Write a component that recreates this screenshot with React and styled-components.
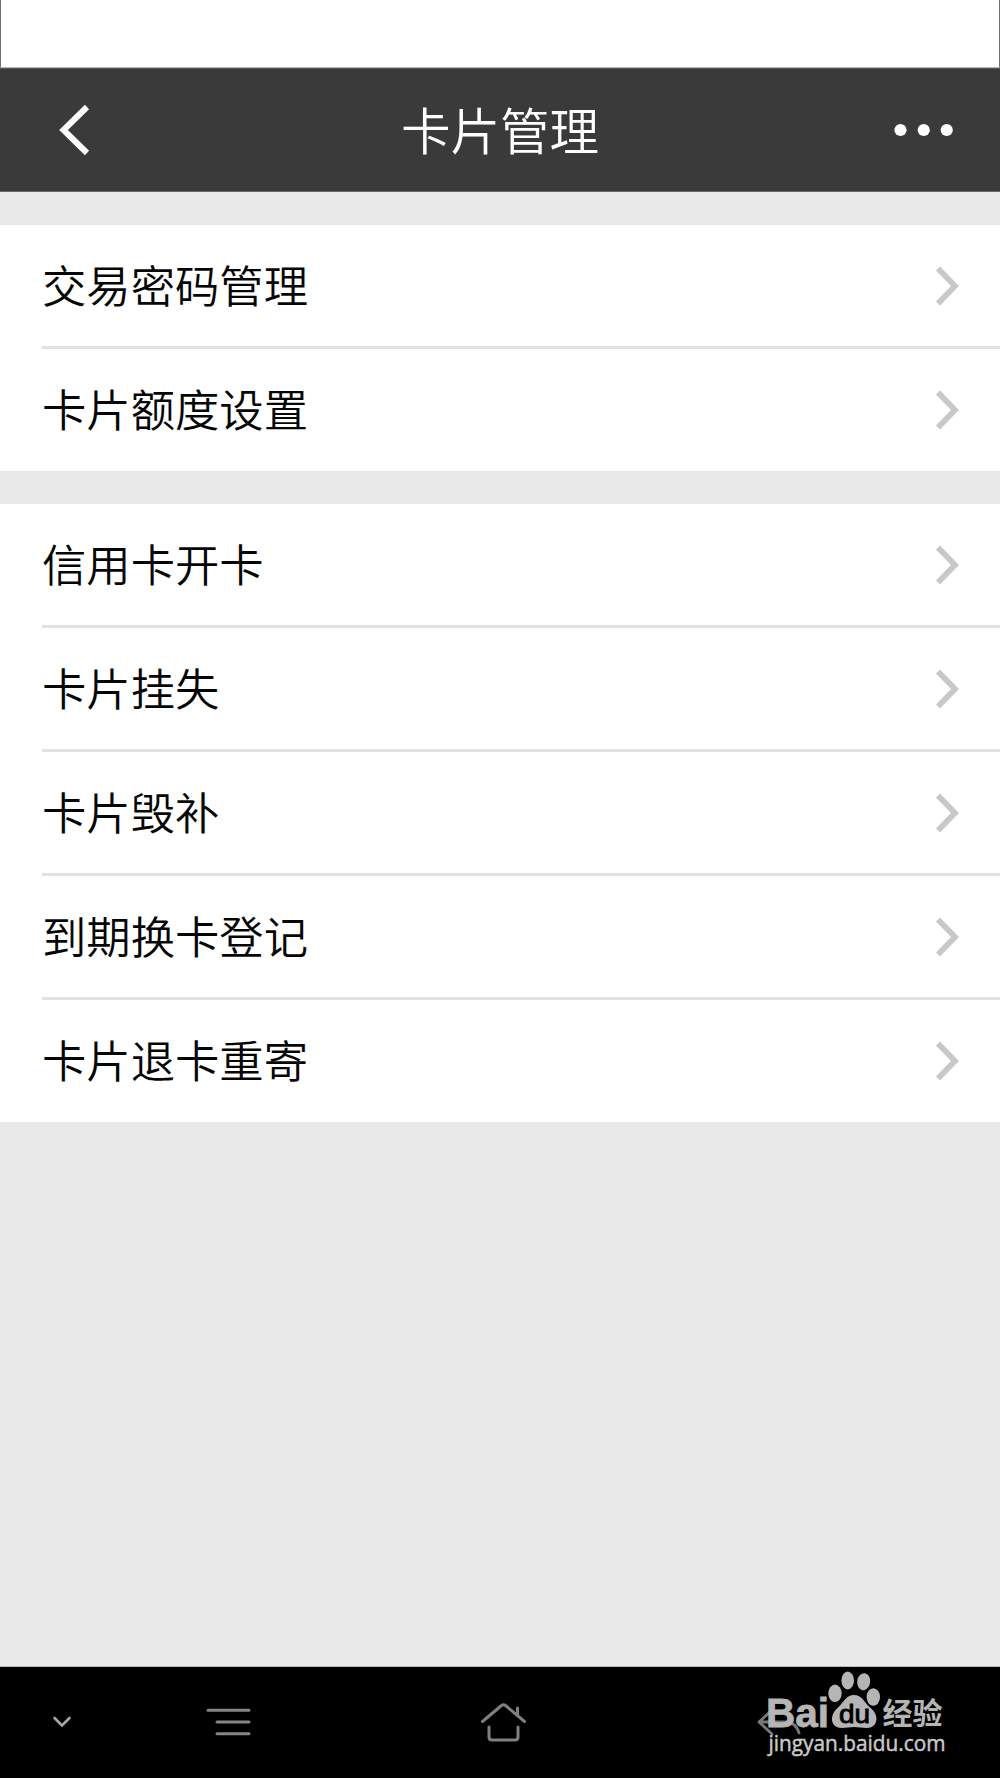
import React from "react";
import styled, { createGlobalStyle } from "styled-components";

const GlobalStyle = createGlobalStyle`
  * { box-sizing: border-box; }
  body { margin: 0; background: #e9e9e9; }
`;

const Screen = styled.div`
  width: 1000px;
  height: 1778px;
  display: flex;
  flex-direction: column;
  overflow: hidden;
  background: #e9e9e9;
  font-family: "Noto Sans CJK SC", "Liberation Sans", sans-serif;
`;

const StatusBar = styled.div`
  flex: none;
  height: 68px;
  background: #fff;
  border: solid #707070;
  border-width: 0 1px;
  border-bottom: 1px solid #b5b5b5;
`;

const TitleBar = styled.header`
  flex: none;
  height: 124px;
  display: grid;
  grid-template-columns: 150px 1fr 150px;
  align-items: center;
  background: #3a3a3a;
  border-top: 1px solid #555;
  border-bottom: 1px solid #6b6868;
`;

const BarButton = styled.button`
  display: flex;
  justify-content: ${(p) => (p.$end ? "flex-end" : "flex-start")};
  padding: ${(p) => (p.$end ? "0 46px 0 0" : "0 0 0 58px")};
  border: 0;
  background: none;
`;

const Title = styled.h1`
  margin: 0;
  padding-bottom: 3px;
  text-align: center;
  color: #fff;
  font-size: 49.5px;
  font-weight: 350;
  line-height: 72px;
`;

const Menu = styled.main`
  flex: 1;
  display: flex;
  flex-direction: column;
  gap: 33px;
  padding-top: 33px;
`;

const Group = styled.section`
  display: flex;
  flex-direction: column;
  background: #fff;
`;

const Row = styled.div`
  height: ${(p) => (p.$last ? 122 : 124)}px;
  margin-left: 42px;
  padding: 0 41px 0 0;
  display: flex;
  align-items: center;
  justify-content: space-between;
  border-bottom: ${(p) => (p.$last ? "0" : "3px solid #e2e2e2")};
`;

const Label = styled.span`
  padding-bottom: 4px;
  color: #060606;
  font-size: 44.33px;
  font-weight: 350;
  line-height: 64px;
`;

const NavBar = styled.footer`
  position: relative;
  flex: none;
  height: 112px;
  display: grid;
  grid-template-columns: 206px 274px 277px 1fr;
  align-items: center;
  padding-bottom: 1px;
  background: #000;
  border-top: 1px solid #bbb;
`;

const NavItem = styled.div`
  display: flex;
  padding-left: ${(p) => p.$inset || 0}px;
`;

const Watermark = styled.div`
  position: absolute;
  left: 766px;
  top: 4px;
  width: 190px;
  height: 96px;
`;

const groups = [
  ["交易密码管理", "卡片额度设置"],
  ["信用卡开卡", "卡片挂失", "卡片毁补", "到期换卡登记", "卡片退卡重寄"],
];

const BackIcon = () => (
  <svg width="32" height="52" viewBox="0 0 32 52" fill="none" stroke="#fff" strokeWidth="6">
    <path d="M29 3 L5.500 26 L29 49" />
  </svg>
);

const MoreIcon = () => (
  <svg width="60" height="14" viewBox="0 0 60 14" fill="#fff">
    <circle cx="6.500" cy="7" r="6.1" />
    <circle cx="29.700" cy="7" r="6.1" />
    <circle cx="52.700" cy="7" r="6.1" />
  </svg>
);

const Chevron = () => (
  <svg width="24" height="40" viewBox="0 0 24 40" fill="none" stroke="#c8c8c8" strokeWidth="5.800">
    <path d="M3 2.500 L20 20 L3 37.500" />
  </svg>
);

const DownIcon = () => (
  <svg width="20" height="14" viewBox="0 0 20 14" fill="none" stroke="#a6a6a6" strokeWidth="2.6" strokeLinecap="round">
    <path d="M2.500 3 L10 10.500 L17.500 3" />
  </svg>
);

const MenuIcon = () => (
  <svg width="46" height="30" viewBox="0 0 46 30" fill="none" stroke="#858585" strokeWidth="3" strokeLinecap="round">
    <path d="M2 3.300 H43 M11 15 H43 M11 26.700 H43" />
  </svg>
);

const HomeIcon = () => (
  <svg width="48" height="42" viewBox="0 0 48 42" fill="none" stroke="#808080" strokeWidth="3" strokeLinecap="round" strokeLinejoin="round">
    <path d="M2.500 20.500 L21.500 4.500 Q23.500 3 25.500 4.500 L44.500 20.500 M37.500 14 V7" />
    <path d="M9 26 V36 Q9 39 12 39 H35 Q38 39 38 36 V26" />
  </svg>
);

const ReturnIcon = () => (
  <svg width="46" height="30" viewBox="0 0 46 30" fill="none" stroke="#777" strokeWidth="2.800" strokeLinecap="round" strokeLinejoin="round">
    <path d="M15 3 L2 15 L15 27 M2 15 H28 Q39 15 42 26" />
  </svg>
);

const BrandLogo = () => (
  <svg width="190" height="96" viewBox="0 0 190 96" fill="#b5b5b5">
    <text x="0" y="55.500" fontFamily="Liberation Sans, sans-serif" fontSize="41" fontWeight="700" textLength="63" lengthAdjust="spacingAndGlyphs" stroke="#b5b5b5" strokeWidth="0.8">Bai</text>
    <ellipse cx="69" cy="22.300" rx="6.700" ry="8.700" />
    <ellipse cx="81.700" cy="9.500" rx="6.300" ry="8.900" />
    <ellipse cx="97.700" cy="10.700" rx="6.500" ry="8.600" transform="rotate(8 97.700 10.700)" />
    <ellipse cx="107.300" cy="26" rx="6.700" ry="8.700" />
    <path d="M88 24 C96 24 98 31 104 36.500 C114 44 112 57 101 57 C96 57 92 56 88 56 C84 56 80 57 76 57 C64 57 63 44 72 36.500 C78 31 80 24 88 24 Z" />
    <text x="73" y="51.500" fill="#000" stroke="#000" strokeWidth="0.900" fontFamily="Liberation Sans, sans-serif" fontSize="26.500" textLength="31" lengthAdjust="spacingAndGlyphs">du</text>
    <text x="116.500" y="53" fontFamily="Noto Sans CJK SC, sans-serif" fontSize="30" fontWeight="700">经验</text>
    <text x="2.500" y="80" fill="#c9c9c9" stroke="#c9c9c9" strokeWidth="0.500" fontFamily="Open Sans, sans-serif" fontSize="22.500" textLength="177" lengthAdjust="spacingAndGlyphs">jingyan.baidu.com</text>
  </svg>
);

export default function App() {
  return (
    <Screen>
      <GlobalStyle />
      <StatusBar />
      <TitleBar>
        <BarButton><BackIcon /></BarButton>
        <Title>卡片管理</Title>
        <BarButton $end><MoreIcon /></BarButton>
      </TitleBar>
      <Menu>
        {groups.map((items, g) => (
          <Group key={g}>
            {items.map((item, i) => (
              <Row key={item} $last={i === items.length - 1}>
                <Label>{item}</Label>
                <Chevron />
              </Row>
            ))}
          </Group>
        ))}
      </Menu>
      <NavBar>
        <NavItem $inset={51.7}><DownIcon /></NavItem>
        <NavItem><MenuIcon /></NavItem>
        <NavItem><HomeIcon /></NavItem>
        <NavItem><ReturnIcon /></NavItem>
        <Watermark><BrandLogo /></Watermark>
      </NavBar>
    </Screen>
  );
}
